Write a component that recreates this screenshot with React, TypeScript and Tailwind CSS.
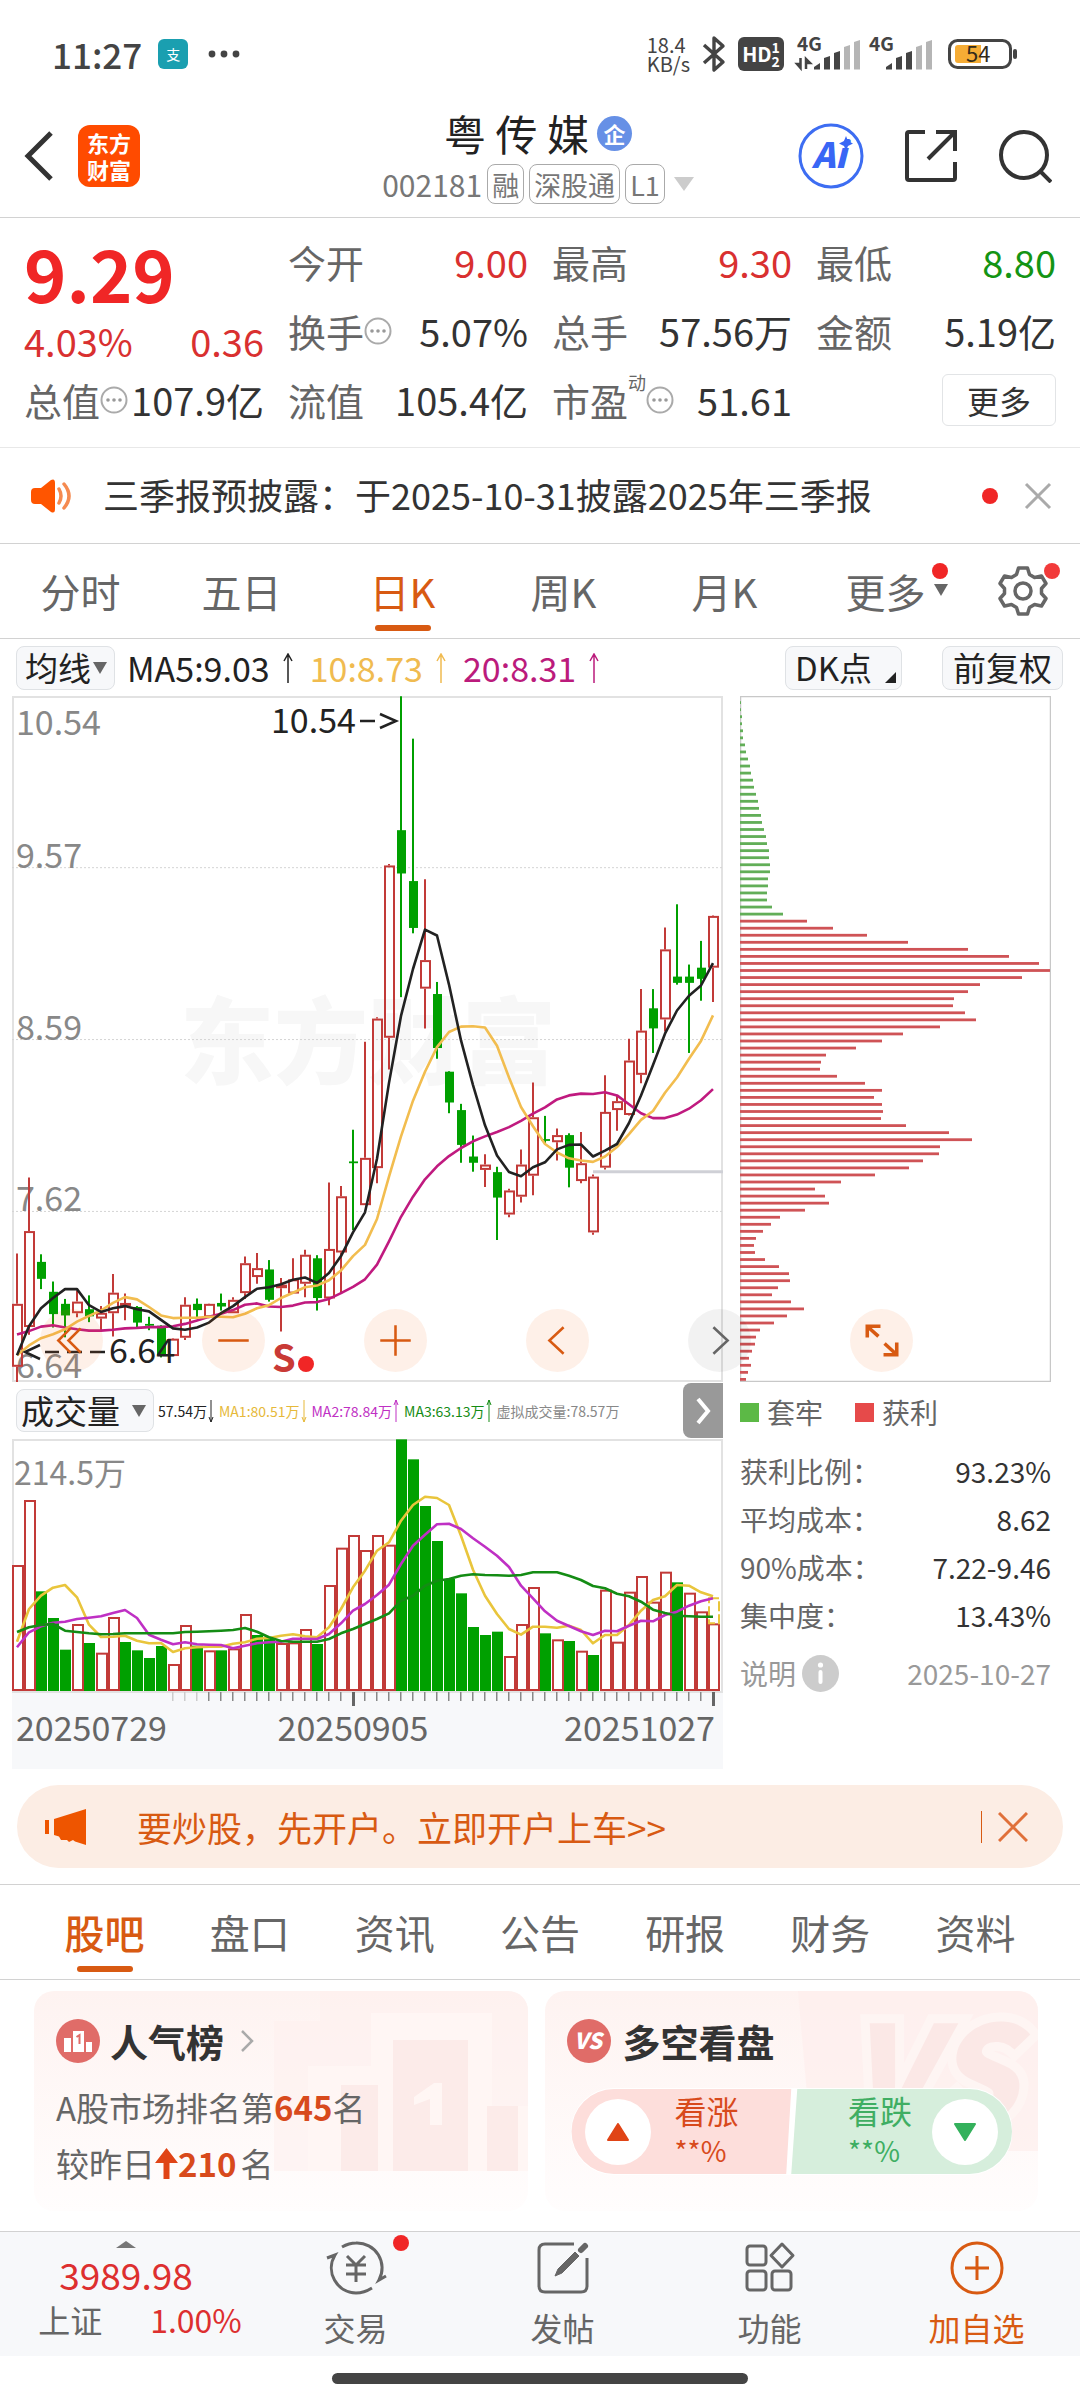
import { ReactNode } from "react";

type Candle = [up: number, high: number, top: number, bottom: number, low: number];

const STEP = 12;
const cx = (i: number) => 5 + STEP * i;

// [1 = rise / 0 = fall, high, body top, body bottom, low]
const candles: Candle[] = [
  [1, 1262, 1375, 1516, 1550], [1, 1092, 1212, 1427, 1444], [0, 1264, 1281, 1319, 1342],
  [0, 1325, 1348, 1398, 1428], [0, 1364, 1375, 1401, 1450], [1, 1345, 1370, 1396, 1405],
  [0, 1356, 1387, 1403, 1416], [1, 1380, 1395, 1408, 1436], [1, 1308, 1350, 1396, 1448],
  [1, 1352, 1373, 1376, 1412], [0, 1380, 1382, 1417, 1427], [0, 1404, 1420, 1424, 1434],
  [0, 1423, 1424, 1490, 1495], [1, 1452, 1453, 1492, 1492], [1, 1360, 1377, 1451, 1456],
  [0, 1363, 1375, 1389, 1405], [1, 1374, 1375, 1405, 1407], [0, 1352, 1373, 1381, 1390],
  [1, 1360, 1366, 1396, 1396], [1, 1269, 1284, 1351, 1364], [1, 1261, 1295, 1315, 1330],
  [0, 1277, 1298, 1366, 1370], [1, 1317, 1332, 1340, 1437], [1, 1273, 1320, 1352, 1352],
  [1, 1254, 1265, 1330, 1360], [0, 1266, 1273, 1362, 1390], [1, 1103, 1252, 1363, 1378],
  [1, 1111, 1134, 1260, 1352], [0, 985, 1056, 1060, 1210], [1, 788, 1048, 1154, 1154],
  [1, 733, 736, 1071, 1105], [1, 390, 393, 779, 850], [0, 14, 314, 411, 688],
  [0, 109, 428, 533, 545], [1, 424, 605, 669, 758], [0, 654, 681, 802, 826],
  [0, 854, 855, 924, 948], [0, 927, 941, 1019, 1059], [0, 998, 1045, 1059, 1079],
  [1, 1040, 1063, 1075, 1113], [0, 1068, 1080, 1137, 1232], [1, 1117, 1121, 1175, 1181],
  [1, 1029, 1063, 1135, 1148], [1, 879, 957, 1088, 1132], [0, 954, 1006, 1010, 1018],
  [1, 982, 997, 1013, 1054], [0, 993, 997, 1070, 1114], [1, 990, 1060, 1100, 1105],
  [1, 1085, 1090, 1215, 1220], [1, 863, 945, 1070, 1074], [1, 907, 921, 941, 987],
  [1, 781, 830, 952, 953], [1, 670, 763, 862, 881], [0, 670, 713, 758, 813],
  [1, 532, 581, 738, 765], [0, 480, 642, 656, 660], [0, 615, 642, 656, 813],
  [0, 562, 622, 647, 696], [1, 505, 506, 622, 699],
];

const ma5 = [1490, 1425, 1385, 1362, 1342, 1342, 1378, 1393, 1385, 1380, 1387, 1392, 1411, 1430, 1433, 1428, 1417, 1396, 1380, 1360, 1341, 1338, 1331, 1321, 1316, 1328, 1306, 1268, 1215, 1170, 1050, 880, 730, 625, 537, 550, 660, 785, 885, 975, 1043, 1080, 1089, 1069, 1058, 1029, 1019, 1018, 1045, 1032, 1017, 970, 908, 840, 770, 718, 685, 662, 612];
const ma10 = [1490, 1468, 1452, 1443, 1432, 1415, 1402, 1390, 1373, 1360, 1365, 1382, 1401, 1407, 1406, 1406, 1404, 1404, 1405, 1397, 1385, 1378, 1362, 1350, 1338, 1334, 1322, 1300, 1268, 1243, 1185, 1090, 1000, 920, 855, 800, 766, 754, 753, 756, 797, 868, 934, 977, 1017, 1036, 1049, 1054, 1057, 1045, 1024, 995, 963, 943, 902, 868, 826, 786, 729];
const ma20 = [1444, 1436, 1426, 1423, 1428, 1432, 1435, 1435, 1433, 1430, 1429, 1427, 1427, 1425, 1420, 1412, 1404, 1397, 1389, 1377, 1374, 1381, 1382, 1379, 1372, 1371, 1364, 1351, 1337, 1320, 1287, 1235, 1180, 1135, 1096, 1067, 1044, 1026, 1011, 1000, 990, 979, 965, 949, 935, 917, 908, 904, 905, 901, 908, 928, 948, 959, 959, 951, 938, 919, 894];

const volumes = [558, 363, 637, 717, 812, 735, 792, 821, 714, 789, 814, 837, 801, 855, 738, 800, 814, 814, 808, 705, 768, 780, 792, 790, 750, 795, 618, 506, 468, 513, 468, 497, 181, 241, 381, 486, 600, 643, 744, 768, 758, 831, 735, 624, 763, 781, 786, 815, 828, 632, 788, 638, 591, 668, 578, 610, 641, 697, 733];
const fallVolumes = [2, 3, 4, 6, 9, 10, 11, 12, 15, 17, 20, 21, 25, 32, 33, 34, 35, 36, 37, 38, 39, 40, 44, 46, 48, 55];
const vma1 = [788, 690, 650, 626, 618, 655, 737, 774, 773, 770, 785, 793, 792, 819, 808, 805, 803, 803, 794, 790, 779, 777, 770, 766, 772, 775, 745, 690, 625, 575, 515, 490, 425, 378, 353, 357, 378, 470, 572, 650, 705, 750, 767, 743, 743, 746, 740, 753, 793, 768, 768, 738, 695, 663, 652, 618, 620, 640, 652];
const vma2 = [805, 760, 742, 731, 728, 720, 716, 712, 702, 693, 717, 767, 782, 796, 790, 796, 797, 798, 808, 800, 793, 790, 788, 779, 779, 780, 765, 733, 695, 675, 648, 617, 555, 500, 467, 436, 434, 450, 478, 503, 530, 564, 620, 658, 697, 725, 741, 757, 768, 755, 757, 740, 725, 727, 708, 698, 680, 667, 658];
const vma3 = [759, 745, 738, 735, 755, 759, 763, 766, 765, 763, 763, 763, 763, 763, 759, 758, 757, 755, 753, 747, 758, 775, 786, 788, 788, 788, 780, 763, 750, 735, 720, 703, 665, 650, 620, 605, 600, 590, 586, 588, 589, 590, 588, 580, 580, 580, 590, 603, 621, 628, 644, 652, 668, 692, 702, 710, 712, 713, 713];

const trapped = [1, 1, 2, 2, 3, 3, 5, 6, 8, 10, 11, 13, 14, 16, 18, 19, 21, 22, 24, 26, 27, 29, 29, 30, 30, 28, 28, 27, 27, 32, 43];
const profit = [67, 93, 127, 168, 228, 269, 299, 310, 282, 240, 228, 214, 213, 225, 236, 200, 163, 142, 116, 86, 81, 80, 97, 125, 142, 134, 142, 143, 141, 166, 209, 232, 200, 199, 183, 169, 135, 101, 75, 85, 89, 65, 40, 31, 23, 16, 14, 15, 25, 39, 49, 50, 38, 32, 51, 64, 47, 34, 20, 16, 15, 12, 9, 11, 8, 6];

const priceY = (v: number) => v / 2.24 - 6;
const volumeY = (v: number) => v / 3 - 60;

const line = (values: number[], y: (v: number) => number) =>
  values.map((v, i) => `${cx(i)},${y(v).toFixed(1)}`).join(" ");

function StatusBar() {
  return (
    <div className="flex h-[108px] items-center justify-between pr-[62px] pl-[52px] text-[#444]">
      <div className="flex items-center">
        <span className="pb-[2px] text-[35px] leading-none font-medium">11:27</span>
        <span className="ml-4 flex h-[30px] w-[30px] items-center justify-center rounded-md bg-[#1a9fb0] text-[14px] leading-none text-white">
          支
        </span>
        <svg className="ml-5 h-2 w-8" viewBox="0 0 32 8" fill="#444">
          <circle cx="4" cy="4" r="3.4" />
          <circle cx="16" cy="4" r="3.4" />
          <circle cx="28" cy="4" r="3.4" />
        </svg>
      </div>
      <div className="flex items-center">
        <span className="mr-3 text-[20px] leading-[19px]">
          18.4
          <br />
          KB/s
        </span>
        <svg className="mr-3 h-[38px] w-6" viewBox="0 0 24 38" fill="none" stroke="#444" strokeWidth="3.4">
          <path d="M2 10 L21 27 L12 35 V3 L21 11 L2 28" strokeLinejoin="round" />
        </svg>
        <span className="mr-3 flex h-[34px] w-[46px] items-center justify-center rounded-md bg-[#444] text-white">
          <span className="text-[20px] leading-none font-bold">HD</span>
          <span className="text-[14px] leading-[14px] font-bold">
            1
            <br />2
          </span>
        </span>
        <Signal data />
        <Signal />
        <svg className="ml-2 h-[32px] w-[70px]" viewBox="0 0 70 32">
          <rect x="1.5" y="2.5" width="61" height="27" rx="8" fill="#fff" stroke="#444" strokeWidth="3" />
          <path d="M10 7 H33 V25 H10 Q7 25 7 22 V10 Q7 7 10 7Z" fill="#f5ac35" />
          <rect x="65" y="11" width="4" height="10" rx="2" fill="#444" />
          <text x="18" y="24" fontSize="22" fill="#332a1a">
            54
          </text>
        </svg>
      </div>
    </div>
  );
}

function Signal({ data = false }: { data?: boolean }) {
  return (
    <svg className="mr-1 h-9 w-[68px] overflow-visible" viewBox="0 0 68 36" fill="#444">
      <text x="1" y="15" fontSize="19" fontWeight="700">
        4G
      </text>
      {data && (
        <path d="M4.500 22 V32 M1 28 L4.500 32 V28Z M10 33 V23 L14 27 H10" stroke="#444" strokeWidth="2.500" />
      )}
      <path d="M18 33.500 V31 L24 27 V33.500Z" />
      <path d="M28 33.500 V22 L34 20 V33.500Z" />
      <path d="M38 33.500 V17 L44 15 V33.500Z" />
      <g fill="#b5b5b5">
        <path d="M48 33.500 V11 L54 9 V33.500Z" />
        <path d="M58 33.500 V6 L64 4 V33.500Z" />
      </g>
    </svg>
  );
}

function Tag({ children }: { children: ReactNode }) {
  return (
    <span className="flex h-10 items-center rounded-lg border border-[#aaa] px-1 text-[27px] leading-none">
      {children}
    </span>
  );
}

function Header() {
  return (
    <header className="grid h-[110px] grid-cols-[1fr_auto_1fr] items-center border-b border-[#d2d2d2] pr-7 pb-[14px] pl-6">
      <div className="flex items-center gap-6">
        <button aria-label="返回">
          <svg className="h-[52px] w-[30px]" viewBox="0 0 30 52" fill="none" stroke="#333" strokeWidth="5">
            <path d="M27 3 L4 26 L27 49" />
          </svg>
        </button>
        <span className="flex h-[62px] w-[62px] items-center justify-center rounded-xl bg-[#ff4b00] text-center text-[22px] leading-[27px] font-bold text-white">
          东方
          <br />
          财富
        </span>
      </div>
      <div className="flex flex-col items-center gap-[6px]">
        <h1 className="flex items-center gap-2 text-[42px] leading-[50px] text-[#222]">
          粤 传 媒
          <span className="flex h-[35px] w-[35px] items-center justify-center rounded-full bg-[#6690e6] text-[22px] leading-none font-bold text-white">
            企
          </span>
        </h1>
        <button className="flex items-center gap-[5px] text-[30px] leading-10 text-[#777]" aria-label="002181 融 深股通 L1">
          002181
          <Tag>融</Tag>
          <Tag>深股通</Tag>
          <Tag>L1</Tag>
          <svg className="ml-1 h-[14px] w-[20px]" viewBox="0 0 20 14">
            <path d="M0 0 H20 L10 14Z" fill="#ccc" />
          </svg>
        </button>
      </div>
      <div className="flex items-center justify-end gap-10">
        <button aria-label="Ai">
          <svg className="h-[66px] w-[66px]" viewBox="0 0 66 66">
            <circle cx="33" cy="33" r="31" fill="#fff" stroke="#3d6df2" strokeWidth="3" />
            <text x="14" y="45" fontSize="35" fontWeight="900" fontStyle="italic" fill="#3866f5">
              Ai
            </text>
            <path d="M48 13 L50 18 L55 20.500 L50 23 L48 28 L46 23 L41 20.500 L46 18Z" fill="#3866f5" />
          </svg>
        </button>
        <button aria-label="分享">
          <svg className="h-[54px] w-[54px]" viewBox="0 0 54 54" fill="none" stroke="#333" strokeWidth="4">
            <path d="M21 3 H5 Q3 3 3 5 V49 Q3 51 5 51 H49 Q51 51 51 49 V33" />
            <path d="M32 3 H51 V22 M51 3 L24 30" />
          </svg>
        </button>
        <button aria-label="搜索">
          <svg className="h-[54px] w-[54px]" viewBox="0 0 54 54" fill="none" stroke="#333" strokeWidth="4">
            <circle cx="26" cy="26" r="23" />
            <path d="M42 42 L53 53" />
          </svg>
        </button>
      </div>
    </header>
  );
}

function More() {
  return (
    <svg className="h-[28px] w-[28px]" viewBox="0 0 28 28" fill="#999">
      <circle cx="14" cy="14" r="12.500" fill="none" stroke="#aaa" strokeWidth="2" />
      <circle cx="8" cy="14" r="1.800" />
      <circle cx="14" cy="14" r="1.800" />
      <circle cx="20" cy="14" r="1.800" />
    </svg>
  );
}

interface QuoteProps {
  label: string;
  value: string;
  color?: string;
  more?: boolean;
  sup?: string;
}

function Quote({ label, value, color = "text-[#333]", more, sup }: QuoteProps) {
  return (
    <div className="flex items-center justify-between whitespace-nowrap">
      <dt className="flex items-center text-[#666]">
        {label}
        {sup && <span className="self-start pt-2 text-[18px] leading-none">{sup}</span>}
        {more && <More />}
      </dt>
      <dd className={color}>{value}</dd>
    </div>
  );
}

function Quotes() {
  return (
    <section className="grid h-[230px] grid-cols-4 content-start gap-x-6 border-b border-[#e8e8e8] px-6 pt-[9px] text-[38px] leading-[69px]">
      <div className="flex h-[138px] flex-col text-[#d93030]">
        <span className="text-[72px] leading-[90px] font-bold text-[#f02626]">9.29</span>
        <span className="flex justify-between leading-[48px]">
          <span>4.03%</span>
          <span>0.36</span>
        </span>
      </div>
      <dl>
        <Quote label="今开" value="9.00" color="text-[#d93030]" />
        <Quote label="换手" value="5.07%" more />
      </dl>
      <dl>
        <Quote label="最高" value="9.30" color="text-[#d93030]" />
        <Quote label="总手" value="57.56万" />
      </dl>
      <dl>
        <Quote label="最低" value="8.80" color="text-[#149414]" />
        <Quote label="金额" value="5.19亿" />
      </dl>
      <dl>
        <Quote label="总值" value="107.9亿" more />
      </dl>
      <dl>
        <Quote label="流值" value="105.4亿" />
      </dl>
      <dl>
        <Quote label="市盈" value="51.61" more sup="动" />
      </dl>
      <div className="flex h-[69px] items-center justify-end">
        <button className="h-[52px] w-[114px] rounded-md border border-[#e2e4e6] text-[32px] leading-none text-[#333]">
          更多
        </button>
      </div>
    </section>
  );
}

function Notice() {
  return (
    <section className="flex h-24 items-center border-b border-[#d2d2d2] pr-7 pl-[31px]">
      <svg className="h-9 w-[42px]" viewBox="0 0 42 36">
        <path d="M4 10 H10 L20 2 Q24 0 24 5 V31 Q24 36 20 34 L10 26 H4 Q0 26 0 22 V14 Q0 10 4 10Z" fill="#ff5500" />
        <path d="M28 11 Q32 18 28 25 M33 6 Q43 18 33 30" fill="none" stroke="#f58a50" strokeWidth="3.500" strokeLinecap="round" />
      </svg>
      <p className="ml-[30px] flex-1 pb-1 text-[36px] leading-none whitespace-nowrap text-[#333]">
        三季报预披露：于2025-10-31披露2025年三季报
      </p>
      <span className="mr-[26px] h-4 w-4 rounded-full bg-[#f02626]" />
      <button aria-label="关闭">
        <svg className="h-7 w-7" viewBox="0 0 28 28" stroke="#aaa" strokeWidth="3">
          <path d="M2 2 L26 26 M26 2 L2 26" />
        </svg>
      </button>
    </section>
  );
}

function Tab({ children, active }: { children: ReactNode; active?: boolean }) {
  return (
    <button
      className={
        active
          ? "relative flex h-full items-center justify-center text-[#d85a12]"
          : "relative flex h-full items-center justify-center"
      }
    >
      {children}
      {active && <span className="absolute bottom-[7px] h-[6px] w-14 rounded-[3px] bg-[#d85a12]" />}
    </button>
  );
}

function PeriodTabs() {
  return (
    <nav className="flex h-[95px] items-center border-b border-[#d2d2d2] text-[40px] leading-none text-[#666]">
      <div className="grid h-full flex-1 grid-cols-6">
        <Tab>分时</Tab>
        <Tab>五日</Tab>
        <Tab active>日K</Tab>
        <Tab>周K</Tab>
        <Tab>月K</Tab>
        <Tab>
          更多
          <span className="absolute top-[19px] right-[18px] h-4 w-4 rounded-full bg-[#f02626]" />
          <svg className="absolute top-10 right-[18px] h-3 w-[14px]" viewBox="0 0 14 12">
            <path d="M0 0 H14 L7 12Z" fill="#666" />
          </svg>
        </Tab>
      </div>
      <button className="relative flex h-full w-[114px] items-center justify-center" aria-label="设置">
        <svg className="h-[50px] w-[50px]" viewBox="0 0 50 50" fill="none" stroke="#666" strokeWidth="3.500" strokeLinejoin="round">
          <path d="M20.500 2 H29.500 L31.500 8.500 L36.500 11.500 L43.500 10 L48 17.500 L43.500 22.500 V27.500 L48 32.500 L43.500 40 L36.500 38.500 L31.500 41.500 L29.500 48 H20.500 L18.500 41.500 L13.500 38.500 L6.500 40 L2 32.500 L6.500 27.500 V22.500 L2 17.500 L6.500 10 L13.500 11.500 L18.500 8.500Z" />
          <circle cx="25" cy="25" r="8" />
        </svg>
        <span className="absolute top-[19px] right-[20px] h-4 w-4 rounded-full bg-[#f23a3a]" />
      </button>
    </nav>
  );
}

function Arrow() {
  return (
    <svg className="h-[30px] w-3 shrink-0" viewBox="0 0 12 30" fill="none" stroke="currentColor" strokeWidth="1.500">
      <path d="M6 30 V1 M2 8 L6 1 L10 8" />
    </svg>
  );
}

function SmallArrow({ down = false }: { down?: boolean }) {
  return (
    <svg className="h-6 w-2 shrink-0" viewBox="0 0 8 24" fill="none" stroke="currentColor">
      {down ? <path d="M4 1 V23 M2 18 L4 23 L6 18" /> : <path d="M4 23 V1 M2 6 L4 1 L6 6" />}
    </svg>
  );
}

function Caret() {
  return (
    <svg className="pointer-events-none absolute right-2 h-3 w-[14px]" viewBox="0 0 14 12">
      <path d="M0 0 H14 L7 12Z" fill="#666" />
    </svg>
  );
}

function IndicatorBar() {
  return (
    <div className="flex h-[57px] items-center pr-[17px] pl-4 text-[34px] leading-none whitespace-nowrap text-[#222]">
      <div className="relative flex items-center">
        <select
          aria-label="均线"
          className="h-11 w-[99px] appearance-none rounded-lg border border-[#dfe2e5] bg-[#f7f8fa] pl-2 text-[33px] leading-none"
        >
          <option>均线</option>
        </select>
        <Caret />
      </div>
      <span className="ml-3 flex items-center gap-3">
        MA5:9.03
        <Arrow />
      </span>
      <span className="ml-4 flex items-center gap-3 text-[#f0bb50]">
        10:8.73
        <Arrow />
      </span>
      <span className="ml-4 flex items-center gap-3 text-[#bb1b7c]">
        20:8.31
        <Arrow />
      </span>
      <button className="relative ml-auto h-11 w-[117px] rounded-lg border border-[#dfe2e5] bg-[#f7f8fa] pr-5 text-[33px] leading-none">
        DK点
        <svg className="absolute right-[5px] bottom-[6px] h-[11px] w-[11px]" viewBox="0 0 11 11">
          <path d="M11 0 V11 H0Z" fill="#222" />
        </svg>
      </button>
      <button className="ml-10 h-11 w-[121px] rounded-lg border border-[#dfe2e5] bg-[#f7f8fa] text-[33px] leading-none">
        前复权
      </button>
    </div>
  );
}

function PriceChart() {
  return (
    <svg className="block h-auto w-full" viewBox="0 0 711 686" fontSize="34">
      <text x="168" y="381" fontSize="94" fontWeight="900" fill="#f7f7f7">
        东方财富
      </text>
      <rect x="1" y="1" width="709" height="684" fill="none" stroke="#e2e2e2" strokeWidth="2" />
      {[398, 783, 1168].map((v) => (
        <path key={v} d={`M0 ${priceY(v)} H711`} stroke="#d4d4d4" strokeDasharray="2 2" />
      ))}
      <g fill="#888">
        <text x="4" y="39">10.54</text>
        <text x="4" y="172">9.57</text>
        <text x="4" y="344">8.59</text>
        <text x="4" y="515">7.62</text>
        <text x="4" y="682">6.64</text>
      </g>
      <path d={`M581 ${priceY(1079)} H711`} stroke="#cfd0d6" strokeWidth="3" />
      {candles.map(([up, high, top, bottom, low], i) => {
        const x = cx(i);
        const y = priceY(top);
        const h = priceY(bottom) - y;
        return up ? (
          <g key={i} stroke="#c23a38" strokeWidth="2" fill="none">
            <path d={`M${x} ${priceY(high)} V${y} M${x} ${y + h} V${priceY(low)}`} />
            <rect x={x - 4} y={y + 1} width="9" height={Math.max(h - 2, 1)} />
          </g>
        ) : (
          <g key={i} fill="#00a000">
            <rect x={x - 1} y={priceY(high)} width="2" height={priceY(low) - priceY(high)} />
            <rect x={x - 4} y={y} width="9" height={h} />
          </g>
        );
      })}
      <g fill="none" strokeWidth="2.600" strokeLinejoin="round">
        <polyline points={line(ma20, priceY)} stroke="#c01a7f" />
        <polyline points={line(ma10, priceY)} stroke="#f2bd4f" />
        <polyline points={line(ma5, priceY)} stroke="#222" />
      </g>
      <g fill="#222">
        <text x="259" y="37">10.54</text>
        <text x="97" y="667">6.64</text>
      </g>
      <g fill="none" stroke="#222" strokeWidth="2.500">
        <path d="M348 25 H363 M368 18 L384 25 L368 32" />
        <path d="M28 649 L13 656 L28 663 M33 656 H47 M55 656 H70 M78 656 H93" />
      </g>
      <text x="260" y="676" fontSize="38" fontWeight="700" fill="#c93a36">
        S
      </text>
      <circle cx="294" cy="668" r="8" fill="#f02626" />
    </svg>
  );
}

function VolumeBar() {
  return (
    <div className="flex h-[57px] items-center justify-between">
      <div className="relative ml-1 flex items-center">
        <select
          aria-label="副图指标"
          className="h-[43px] w-[138px] appearance-none rounded-lg border border-[#dfe2e5] bg-[#f7f8fa] pl-1 text-[33px] leading-none text-[#222]"
        >
          <option>成交量</option>
        </select>
        <Caret />
      </div>
      <div className="ml-1 flex flex-1 items-center gap-1 text-[14px] leading-none whitespace-nowrap">
        <span className="flex items-center text-[#222]">
          57.54万
          <SmallArrow down />
        </span>
        <span className="flex items-center text-[#e6b93a]">
          MA1:80.51万
          <SmallArrow down />
        </span>
        <span className="flex items-center text-[#bf30c4]">
          MA2:78.84万
          <SmallArrow />
        </span>
        <span className="flex items-center text-[#148c14]">
          MA3:63.13万
          <SmallArrow />
        </span>
        <span className="text-[#888]">虚拟成交量:78.57万</span>
      </div>
      <button className="flex h-[55px] w-10 items-center justify-center rounded-l-lg bg-[#999]" aria-label="下一个指标">
        <svg className="h-7 w-4" viewBox="0 0 16 28" fill="none" stroke="#fff" strokeWidth="4">
          <path d="M3 2 L13 14 L3 26" />
        </svg>
      </button>
    </div>
  );
}

function VolumeChart() {
  const base = volumeY(936);
  return (
    <svg className="block h-auto w-full" viewBox="0 0 711 330" fontSize="34">
      <rect x="0" y="253" width="711" height="77" fill="#f7f8fa" />
      <rect x="1" y="1" width="709" height="252" fill="none" stroke="#e2e2e2" strokeWidth="2" />
      {volumes.map((v, i) =>
        fallVolumes.includes(i) ? (
          <rect key={i} x={cx(i) - 5} y={volumeY(v)} width="11" height={base - volumeY(v)} fill="#00a000" />
        ) : (
          <rect key={i} x={cx(i) - 4} y={volumeY(v) + 1} width="10" height={base - volumeY(v) - 2} fill="#fff" stroke="#c23a38" strokeWidth="2" />
        )
      )}
      <rect x="697" y={volumeY(658)} width="10" height="25" fill="none" stroke="#e9c53c" strokeWidth="2" strokeDasharray="10 3" />
      <g fill="none" strokeWidth="2.600" strokeLinejoin="round">
        <polyline points={line(vma1, volumeY)} stroke="#e9c53c" />
        <polyline points={line(vma2, volumeY)} stroke="#bf30c4" />
        <polyline points={line(vma3, volumeY)} stroke="#148c14" />
      </g>
      {volumes.map((_, i) => {
        if (i < 13) return null;
        const major = i === 28 || i === 58;
        return <rect key={i} x={cx(i) - 1} y="253" width={major ? 3 : 1.5} height={major ? 14 : 9} fill={major ? "#666" : i < 16 ? "#ccc" : "#888"} />;
      })}
      <text x="2" y="46" fill="#888" fontSize="32">214.5万</text>
      <g fill="#666">
        <text x="4" y="302">20250729</text>
        <text x="341" y="302" textAnchor="middle">20250905</text>
        <text x="703" y="302" textAnchor="end">20251027</text>
      </g>
    </svg>
  );
}

function ChipChart() {
  return (
    <svg className="block h-auto w-full" viewBox="0 0 311 686">
      <rect x="0.500" y="0.500" width="310" height="685" fill="none" stroke="#c8c8c8" strokeWidth="1.500" />
      {[...trapped, ...profit].map((w, i) => (
        <rect key={i} x="0" y={5.2 + i * 7.05} width={w} height="2.800" fill={i < trapped.length ? "#62ae58" : "#cf5356"} />
      ))}
    </svg>
  );
}

function ChipStats() {
  const rows = [
    ["获利比例：", "93.23%"],
    ["平均成本：", "8.62"],
    ["90%成本：", "7.22-9.46"],
    ["集中度：", "13.43%"],
  ];
  return (
    <div className="text-[28px] leading-[48px] text-[#666]">
      <div className="flex h-[60px] items-center gap-2">
        <span className="h-[19px] w-[19px] bg-[#5cb946]" />
        套牢
        <span className="ml-[24px] h-[19px] w-[19px] bg-[#e64a4a]" />
        获利
      </div>
      <table className="mt-[5px] w-full">
        <tbody>
          {rows.map(([label, value]) => (
            <tr key={label}>
              <th scope="row" className="p-0 text-left font-normal whitespace-nowrap">
                {label}
              </th>
              <td className="p-0 text-right whitespace-nowrap text-[#333]">{value}</td>
            </tr>
          ))}
        </tbody>
      </table>
      <div className="mt-[10px] flex items-center text-[#999]">
        说明
        <button className="ml-[6px]" aria-label="说明">
          <svg className="h-[37px] w-[37px]" viewBox="0 0 37 37">
            <circle cx="18.500" cy="18.500" r="18.500" fill="#ccc" />
            <circle cx="18.500" cy="10" r="2.600" fill="#fff" />
            <rect x="16.500" y="15" width="4" height="14" rx="2" fill="#fff" />
          </svg>
        </button>
        <span className="ml-auto">2025-10-27</span>
      </div>
    </div>
  );
}

const chartButtons = [
  { label: "最左", d: "M30 19 L18 31 L30 43 M40 19 L28 31 L40 43" },
  { label: "缩小", d: "M16 31 H46" },
  { label: "放大", d: "M16 31 H46 M31 16 V46" },
  { label: "向左", d: "M37 18 L23 31 L37 44" },
  { label: "向右", d: "M25 18 L39 31 L25 44", muted: true },
  { label: "全屏", d: "M17 28 V17 H30 M18 18 L28 27 M46 33 V45 H33 M45 44 L34 34", bold: true },
];

function Charts() {
  return (
    <section className="relative flex items-start gap-[17px] pr-[29px] pl-3">
      <div className="min-w-0 flex-[711]">
        <PriceChart />
        <VolumeBar />
        <VolumeChart />
      </div>
      <div className="min-w-0 flex-[311]">
        <ChipChart />
        <ChipStats />
      </div>
      <div className="absolute top-[613px] left-10 flex gap-[99px]">
        {chartButtons.map(({ label, d, muted, bold }) => (
          <button
            key={label}
            aria-label={label}
            className={
              muted
                ? "h-[63px] w-[63px] rounded-full bg-black/5 text-[#666]"
                : "h-[63px] w-[63px] rounded-full bg-[#f26a1b]/10 text-[#d85a12]"
            }
          >
            <svg viewBox="0 0 62 62" fill="none" stroke="currentColor" strokeWidth={bold ? 3.5 : 2.5}>
              <path d={d} />
            </svg>
          </button>
        ))}
      </div>
    </section>
  );
}

function Banner() {
  return (
    <section className="mx-[17px] my-4 flex h-[83px] items-center rounded-[42px] bg-[#fcede4] pr-[35px] pl-7 text-[#d85a12]">
      <svg className="h-9 w-[42px]" viewBox="0 0 42 36" fill="#ee5500">
        <path d="M0 11 H4 V25 H0Z M9 10 L41 0 V36 L30 32.500 L28 31 L24 33 L22 31 L16 31 L14 27.500 L9 26Z" />
      </svg>
      <p className="ml-[50px] flex-1 text-[35px] leading-none whitespace-nowrap">要炒股，先开户。立即开户上车&gt;&gt;</p>
      <span className="mr-4 h-8 w-px bg-[#d85a12]" />
      <button aria-label="关闭">
        <svg className="h-[30px] w-[30px]" viewBox="0 0 30 30" stroke="#e0703a" strokeWidth="3">
          <path d="M1 1 L29 29 M29 1 L1 29" />
        </svg>
      </button>
    </section>
  );
}

function SectionTabs() {
  return (
    <nav className="grid h-[96px] grid-cols-7 border-y border-[#d2d2d2] px-8 text-[40px] leading-none text-[#666]">
      <Tab active>
        <span className="font-medium">股吧</span>
      </Tab>
      <Tab>盘口</Tab>
      <Tab>资讯</Tab>
      <Tab>公告</Tab>
      <Tab>研报</Tab>
      <Tab>财务</Tab>
      <Tab>资料</Tab>
    </nav>
  );
}

function Cards() {
  return (
    <section className="grid grid-cols-2 gap-[17px] pt-[11px] pr-[42px] pb-5 pl-[34px]">
      <article className="relative h-[220px] overflow-hidden rounded-[20px] bg-linear-to-b from-[#fef3f1] to-[#fffdfd] px-[22px] pt-[25px]">
        <svg className="absolute top-0 right-0 h-[185px] w-[254px]" viewBox="0 0 254 185">
          <path d="M0 180 V30 H46 V0 H254 V180Z" fill="#fdf0ee" opacity=".6" />
          <path d="M34 180 V75 H97 V22 H218 V115 H254 V180Z" fill="#fff6f4" />
          <path d="M67 180 V94 H104 V180Z M119 180 V49 H194 V180Z M213 180 V115 H244 V180Z" fill="#fcebe9" />
          <path d="M140 106 L160 92 H168 V134 H156 V108 L140 114Z" fill="#fff6f4" />
        </svg>
        <h2 className="relative flex items-center text-[38px] leading-[50px] font-bold text-[#333]">
          <svg className="mr-[10px] h-11 w-11" viewBox="0 0 44 44">
            <circle cx="22" cy="22" r="22" fill="#e06c68" />
            <path d="M8 33 V19 H15 V33Z M17 33 V12 H28 V33Z M30 33 V23 H36 V33Z" fill="#fff" />
            <path d="M20.500 18 L23.500 16 V25" fill="none" stroke="#e06c68" strokeWidth="2" />
          </svg>
          人气榜
          <svg className="ml-4 h-[22px] w-[14px]" viewBox="0 0 14 22" fill="none" stroke="#aaa" strokeWidth="2.500">
            <path d="M2 1 L12 11 L2 21" />
          </svg>
        </h2>
        <p className="relative mt-[13px] text-[33px] leading-[56px] text-[#666]">
          A股市场排名第<b className="text-[#d84a1c]">645</b>名
        </p>
        <p className="relative flex items-center text-[33px] leading-[56px] text-[#666]">
          较昨日
          <svg className="h-[31px] w-[23px]" viewBox="0 0 23 31" fill="#e04416">
            <path d="M11.500 0 L23 15 H14.500 V31 H8.500 V15 H0Z" />
          </svg>
          <b className="mr-1 text-[#d84a1c]">210</b>名
        </p>
      </article>
      <article className="relative h-[220px] overflow-hidden rounded-[20px] bg-linear-to-b from-[#fef3f1] to-[#fffdfd] px-[22px] pt-[25px]">
        <svg className="absolute top-0 right-0 h-[160px] w-[240px]" viewBox="0 0 240 160" fontSize="134" fontStyle="italic" fontWeight="900">
          <path d="M0 0 H240 V160 H14Z" fill="#fdeeec" opacity=".7" />
          <text x="48" y="132" fill="#fbe8e6" stroke="#fef5f3" strokeWidth="18" paintOrder="stroke">
            VS
          </text>
        </svg>
        <h2 className="relative flex items-center text-[38px] leading-[50px] font-bold text-[#333]">
          <svg className="mr-3 h-11 w-11" viewBox="0 0 44 44">
            <circle cx="22" cy="22" r="22" fill="#e06c68" />
            <text x="21" y="30" fontSize="22" fontStyle="italic" fontWeight="900" fill="#fff" textAnchor="middle">
              VS
            </text>
          </svg>
          多空看盘
        </h2>
        <div className="relative mx-1 mt-[22px] flex h-[87px] gap-1">
          <svg className="absolute inset-0 h-full w-full" viewBox="0 0 441 87" preserveAspectRatio="none">
            <rect x="0" y="0" width="441" height="87" rx="43" fill="#fff" />
            <path d="M43 1 H220 L215 86 H43 A42.500 42.500 0 0 1 43 1Z" fill="#fddedb" />
            <path d="M226 1 H398 A42.500 42.500 0 0 1 398 86 H220Z" fill="#d6eedc" />
          </svg>
          <button className="relative flex flex-1 items-center pl-[14px] text-left text-[32px] leading-[38px] text-[#d84a1c]">
            <span className="mr-6 flex h-[66px] w-[66px] items-center justify-center rounded-full bg-white">
              <svg className="h-[18px] w-[22px]" viewBox="0 0 22 18" fill="#e04416">
                <path d="M11 1 L21 17 H1Z" stroke="#e04416" strokeWidth="2" strokeLinejoin="round" />
              </svg>
            </span>
            <span className="pb-1">
              看涨
              <br />
              <span className="text-[28px]">**%</span>
            </span>
          </button>
          <button className="relative flex flex-1 items-center justify-end pr-[14px] text-left text-[32px] leading-[38px] text-[#3fae63]">
            <span className="pb-1">
              看跌
              <br />
              <span className="text-[28px]">**%</span>
            </span>
            <span className="ml-5 flex h-[66px] w-[66px] items-center justify-center rounded-full bg-white">
              <svg className="h-[18px] w-[22px]" viewBox="0 0 22 18" fill="#34b15c">
                <path d="M11 17 L21 1 H1Z" stroke="#34b15c" strokeWidth="2" strokeLinejoin="round" />
              </svg>
            </span>
          </button>
        </div>
      </article>
    </section>
  );
}

function NavItem({ label, children, active }: { label: string; children: ReactNode; active?: boolean }) {
  return (
    <button
      className={
        active
          ? "flex flex-1 flex-col items-center pt-[9px] text-[#d85a12]"
          : "flex flex-1 flex-col items-center pt-[9px] text-[#666]"
      }
    >
      <span className="relative">
        <svg className="h-[54px] w-[62px]" viewBox="0 0 62 54" fill="none" stroke="currentColor" strokeWidth="3">
          {children}
        </svg>
        {label === "交易" && <span className="absolute -top-[6px] -right-[22px] h-4 w-4 rounded-full bg-[#f02626]" />}
      </span>
      <span className="mt-3 text-[32px] leading-[40px]">{label}</span>
    </button>
  );
}

function BottomNav() {
  return (
    <>
      <nav className="flex h-[125px] border-t border-[#d2d2d2] bg-[#f7f8fa]">
        <button className="flex w-[252px] flex-col items-center pt-[9px] text-[#dd2f2f]">
          <svg className="h-[7px] w-5" viewBox="0 0 20 7">
            <path d="M10 0 L20 7 H0Z" fill="#777" />
          </svg>
          <span className="mt-[3px] text-[37px] leading-[46px]">3989.98</span>
          <span className="flex gap-[48px] pl-7 text-[32px] leading-[44px]">
            <span className="text-[#666]">上证</span>
            <span>1.00%</span>
          </span>
        </button>
        <NavItem label="交易">
          <path d="M17 6 Q24 2 31 2 A25 25 0 0 1 54 39 L61 35" />
          <path d="M47 47 Q39 52 31 52 A25 25 0 0 1 10 14 L2 17" />
          <path d="M22 15 L31 24 L40 15 M31 24 V41 M21 24 H41 M21 33 H41" />
        </NavItem>
        <NavItem label="发帖">
          <path d="M42 3 H13 Q7 3 7 9 V45 Q7 51 13 51 H49 Q55 51 55 45 V17" />
          <path d="M23 35 L26 28 L43 11 L47 15 L30 32Z" fill="currentColor" strokeWidth="1" />
          <path d="M49 9 L53 5" strokeWidth="6" strokeLinecap="round" />
        </NavItem>
        <NavItem label="功能">
          <rect x="8" y="5" width="19" height="19" rx="3" />
          <rect x="8" y="30" width="19" height="19" rx="3" />
          <rect x="33" y="30" width="19" height="19" rx="3" />
          <path d="M43 3 L54 14.500 L43 26 L32 14.500Z" strokeLinejoin="round" />
        </NavItem>
        <NavItem label="加自选" active>
          <circle cx="31" cy="27" r="25" />
          <path d="M19 27 H43 M31 15 V39" />
        </NavItem>
      </nav>
      <div className="flex h-[44px] items-center justify-center">
        <span className="h-[11px] w-[416px] rounded-full bg-[#444]" />
      </div>
    </>
  );
}

export default function App() {
  return (
    <div className="min-h-screen bg-white font-['Noto_Sans_CJK_SC',sans-serif]">
      <StatusBar />
      <Header />
      <main>
        <Quotes />
        <Notice />
        <PeriodTabs />
        <IndicatorBar />
        <Charts />
        <Banner />
        <SectionTabs />
        <Cards />
      </main>
      <BottomNav />
    </div>
  );
}
